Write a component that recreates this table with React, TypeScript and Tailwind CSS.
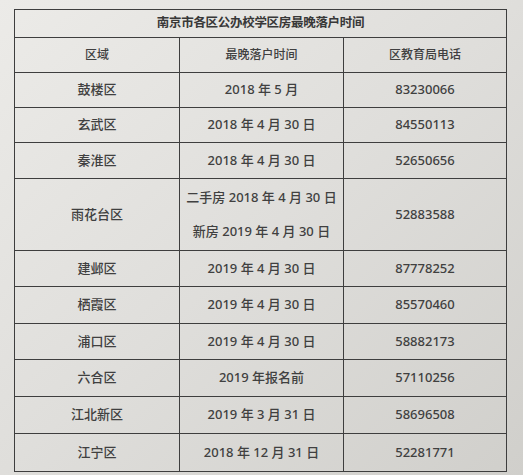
import React from 'react';

type Row = { area: string; time: string[]; phone: string; h: string };

const rows: Row[] = [
  { area: '鼓楼区', time: ['2018 年 5 月'], phone: '83230066', h: 'h-[35px]' },
  { area: '玄武区', time: ['2018 年 4 月 30 日'], phone: '84550113', h: 'h-[35px]' },
  { area: '秦淮区', time: ['2018 年 4 月 30 日'], phone: '52650656', h: 'h-[36px]' },
  {
    area: '雨花台区',
    time: ['二手房 2018 年 4 月 30 日', '新房 2019 年 4 月 30 日'],
    phone: '52883588',
    h: 'h-[72px]',
  },
  { area: '建邺区', time: ['2019 年 4 月 30 日'], phone: '87778252', h: 'h-[36px]' },
  { area: '栖霞区', time: ['2019 年 4 月 30 日'], phone: '85570460', h: 'h-[37px]' },
  { area: '浦口区', time: ['2019 年 4 月 30 日'], phone: '58882173', h: 'h-[36px]' },
  { area: '六合区', time: ['2019 年报名前'], phone: '57110256', h: 'h-[37px]' },
  { area: '江北新区', time: ['2019 年 3 月 31 日'], phone: '58696508', h: 'h-[37px]' },
  { area: '江宁区', time: ['2018 年 12 月 31 日'], phone: '52281771', h: 'h-[38px]' },
];

const cell = 'border-[1.5px] border-[#3e3e3e] text-center align-middle p-0';

export default function App() {
  return (
    <div
      className="w-[523px] h-[475px] overflow-hidden bg-gradient-to-br from-[#ecebe8] via-[#dfdedb] to-[#d0cfcb] pl-[14px] pt-[9px]"
      style={{ fontFamily: '"Noto Sans", "Noto Sans CJK SC", sans-serif' }}
    >
      <table className="w-[492px] border-collapse table-fixed text-[#404040] font-medium">
        <colgroup>
          <col className="w-[165px]" />
          <col className="w-[164px]" />
          <col className="w-[163px]" />
        </colgroup>
        <tbody>
          <tr>
            <td colSpan={3} className={`${cell} h-[28px] text-[12.5px] font-bold text-[#383838] tracking-[-0.3px]`}>
              南京市各区公办校学区房最晚落户时间
            </td>
          </tr>
          <tr>
            <td className={`${cell} h-[35px] text-[12px]`}>区域</td>
            <td className={`${cell} h-[35px] text-[12px]`}>最晚落户时间</td>
            <td className={`${cell} h-[35px] text-[12px]`}>区教育局电话</td>
          </tr>
          {rows.map((r) => (
            <tr key={r.area}>
              <td className={`${cell} ${r.h} text-[13px]`}>{r.area}</td>
              <td className={`${cell} ${r.h} text-[13px]`}>
                {r.time.length > 1 ? (
                  <div className="flex flex-col gap-[14px]">
                    {r.time.map((t) => (
                      <span key={t}>{t}</span>
                    ))}
                  </div>
                ) : (
                  r.time[0]
                )}
              </td>
              <td className={`${cell} ${r.h} text-[13px]`}>{r.phone}</td>
            </tr>
          ))}
        </tbody>
      </table>
    </div>
  );
}
